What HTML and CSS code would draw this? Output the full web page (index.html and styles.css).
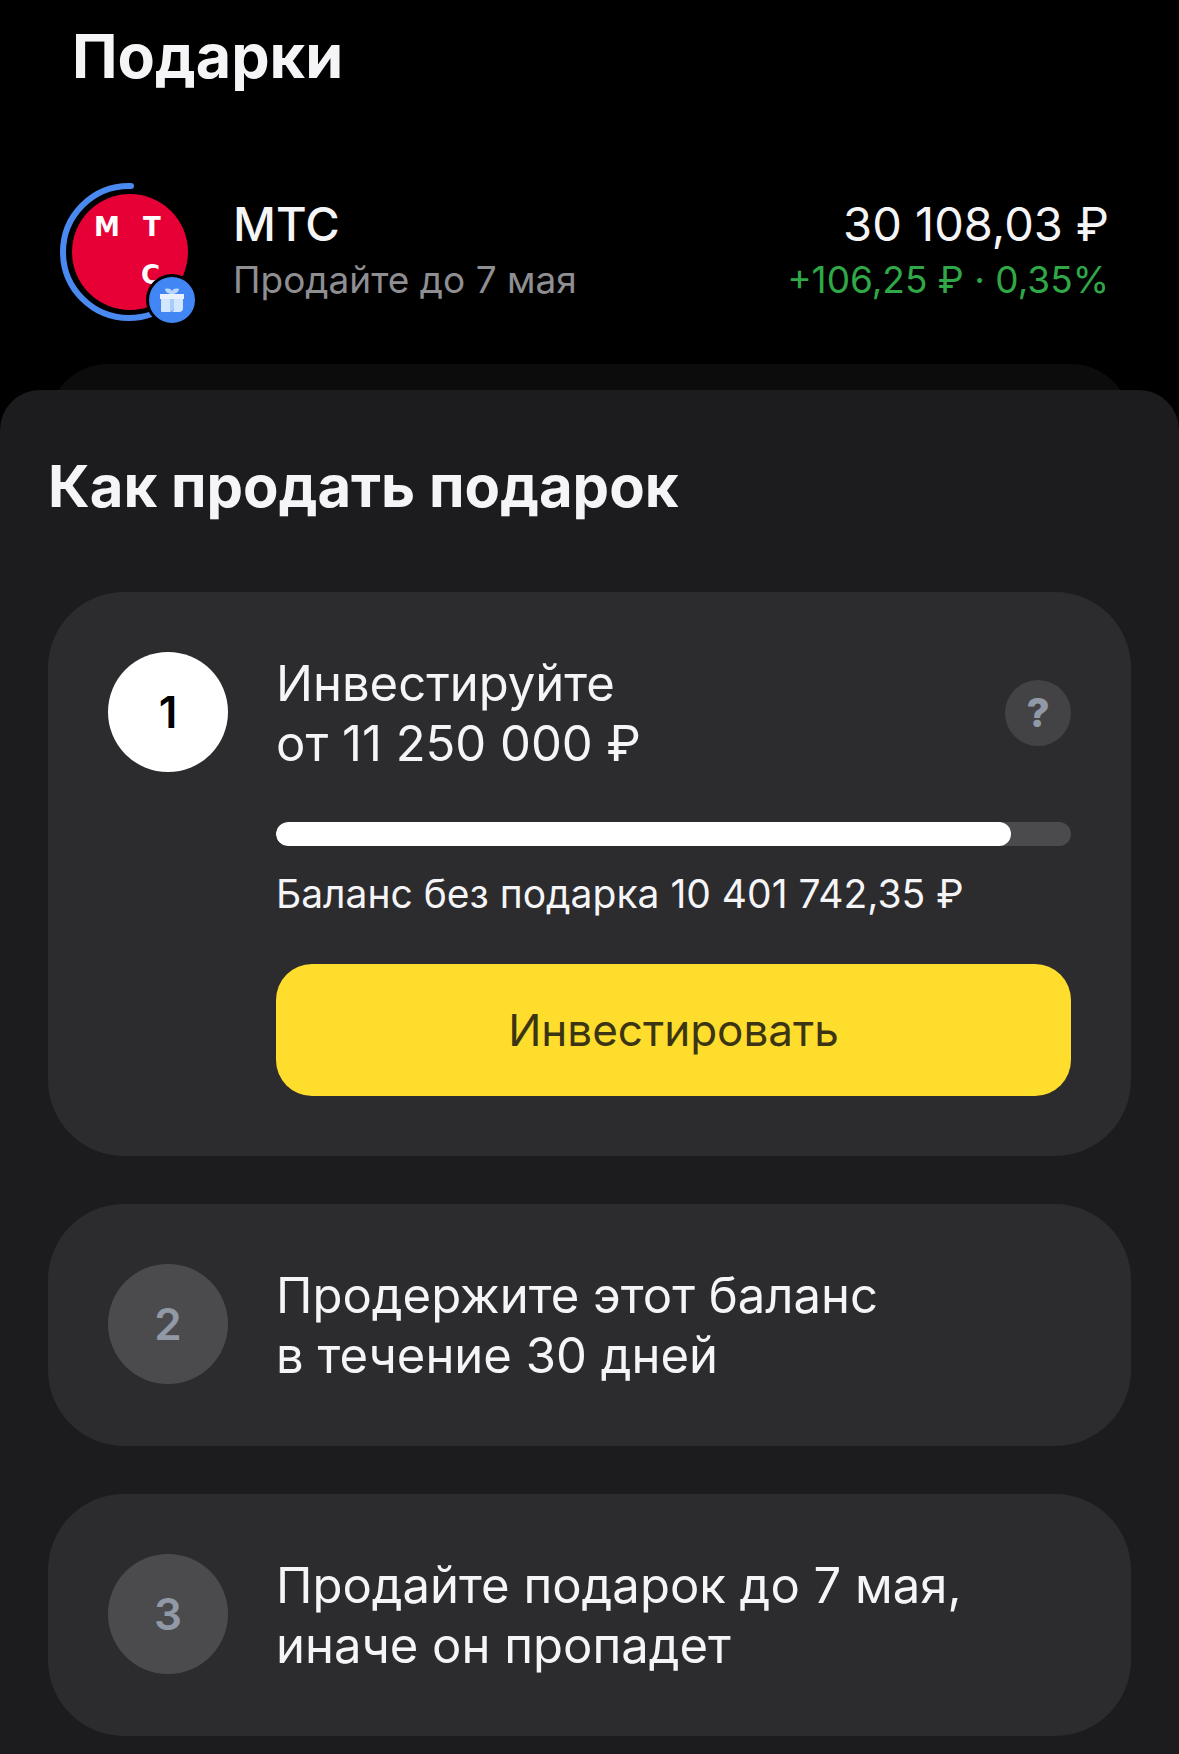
FILE: index.html
```html
<!DOCTYPE html>
<html lang="ru">
<head>
    <meta charset="UTF-8">
    <meta name="viewport" content="width=device-width, initial-scale=1.0">
    <title>Подарки</title>
    <link rel="stylesheet" href="styles.css">
</head>
<body>
    <header class="gifts">
        <h1>Подарки</h1>
        <div class="stock">
            <div class="stock-logo">
                <svg width="140" height="140" viewBox="0 0 140 140" aria-hidden="true">
                    <circle cx="70" cy="70" r="58" fill="#e60035"/>
                    <path d="M71 4H69A66 66 0 0 0 69 136Q81 136 92 132" fill="none" stroke="#4a8af0" stroke-width="6" stroke-linecap="round"/>
                    <g class="logo-letters">
                        <text x="34" y="54">М</text>
                        <text x="83" y="54">Т</text>
                        <text x="81" y="102">С</text>
                    </g>
                </svg>
                <span class="gift-badge">
                    <svg width="24" height="24" viewBox="0 0 24 24" aria-hidden="true">
                        <path d="M0 6h24v5H0z" fill="#e8f2ff"/>
                        <path d="M1 11h9v13H2a1 1 0 0 1-1-1zM14 11h9v9a4 4 0 0 1-4 4h-7q2-1 2-4z" fill="#d3e6ff"/>
                        <path d="M10 11h4v9q0 3-4 4z" fill="#a9ccfb"/>
                        <path d="M12 6C9 6 5 4 5 1c4-1 6 0 7 2 1-2 3-3 7-2 0 3-4 5-7 5z" fill="#b9d6fc"/>
                    </svg>
                </span>
            </div>
            <div class="stock-info">
                <div class="stock-name">МТС</div>
                <div class="stock-note">Продайте до 7 мая</div>
            </div>
            <div class="stock-price">
                <div class="stock-value">30 108,03 ₽</div>
                <div class="stock-change">+106,25 ₽ · 0,35%</div>
            </div>
        </div>
    </header>

    <div class="sheet-back"></div>
    <main class="sheet">
        <h2>Как продать подарок</h2>

        <ol class="steps">
            <li class="step active">
                <span class="step-number">1</span>
                <div class="step-body">
                    <div class="step-head">
                        <p class="step-title">Инвестируйте<br>от 11 250 000 ₽</p>
                        <button class="help-btn" type="button" aria-label="Подробнее">?</button>
                    </div>
                    <progress class="step-progress" value="10401742" max="11250000" aria-labelledby="balance"></progress>
                    <p class="balance" id="balance">Баланс без подарка 10 401 742,35 ₽</p>
                    <button class="invest-btn" type="button">Инвестировать</button>
                </div>
            </li>
            <li class="step">
                <span class="step-number">2</span>
                <p class="step-title">Продержите этот баланс<br>в течение 30 дней</p>
            </li>
            <li class="step">
                <span class="step-number">3</span>
                <p class="step-title">Продайте подарок до 7 мая,<br>иначе он пропадет</p>
            </li>
        </ol>
    </main>
</body>
</html>
```
FILE: styles.css
```css
* {
    box-sizing: border-box;
}
body {
    display: flex;
    flex-direction: column;
    min-height: 100vh;
    margin: 0;
    background-color: #000;
    color: #f5f5f7;
    font-family: Inter, "Liberation Sans", sans-serif;
    -webkit-font-smoothing: antialiased;
}
h1, h2, p {
    margin: 0;
}
button {
    border: none;
    padding: 0;
    font-family: inherit;
    cursor: pointer;
}
.gifts {
    padding: 20px 70px 42px 60px;
}
h1 {
    padding-left: 12px;
    font-size: 61px;
    line-height: 72px;
    font-weight: 700;
}
.stock {
    display: flex;
    align-items: center;
    margin-top: 90px;
}
.stock-logo {
    position: relative;
    flex: none;
    height: 140px;
    margin-right: 33px;
}
.logo-letters {
    fill: #fff;
    font-family: "DejaVu Sans", sans-serif;
    font-size: 26px;
    font-weight: 700;
}
.gift-badge {
    position: absolute;
    right: 2px;
    bottom: -4px;
    display: flex;
    align-items: center;
    justify-content: center;
    width: 52px;
    height: 52px;
    border: 3px solid #000;
    border-radius: 50%;
    background-color: #4285f4;
}
.stock-info {
    flex: 1;
}
.stock-name,
.stock-value {
    font-size: 47px;
    line-height: 56px;
}
.stock-name {
    font-weight: 500;
}
.stock-note,
.stock-change {
    font-size: 37px;
    line-height: 56px;
}
.stock-note {
    color: #8e8e93;
}
.stock-price {
    text-align: right;
}
.stock-change {
    color: #30a847;
}

/* edge of the sheet underneath */
.sheet-back {
    height: 80px;
    margin: 0 48px -54px;
    border-radius: 60px 60px 0 0;
    background-color: #0c0c0d;
}
.sheet {
    position: relative;
    flex: 1;
    padding: 60px 48px 16px;
    border-radius: 40px 40px 0 0;
    background-color: #1c1c1e;
}
h2 {
    font-size: 58px;
    line-height: 72px;
    font-weight: 700;
}
.steps {
    display: grid;
    gap: 48px;
    margin: 70px 0 0;
    padding: 0;
    list-style: none;
}
.step {
    display: flex;
    align-items: flex-start;
    gap: 48px;
    padding: 60px;
    border-radius: 76px;
    background-color: #2c2c2e;
}
.step-number {
    flex: none;
    width: 120px;
    border-radius: 50%;
    background-color: #4b4b4d;
    color: #9299a6;
    font-size: 44px;
    line-height: 120px;
    font-weight: 600;
    text-align: center;
}
.step.active .step-number {
    background-color: #fff;
    color: #000;
}
.step-body {
    flex: 1;
}
.step-head {
    display: flex;
    align-items: center;
    justify-content: space-between;
}
.step-title {
    padding-top: 2px;
    font-size: 49px;
    line-height: 60px;
}
.help-btn {
    width: 66px;
    height: 66px;
    border-radius: 50%;
    background-color: #434345;
    color: #9299a6;
    font-size: 40px;
    line-height: 66px;
    font-weight: 800;
}
.step-progress {
    display: block;
    width: 100%;
    height: 24px;
    margin-top: 48px;
    border: none;
    border-radius: 12px;
    overflow: hidden;
    appearance: none;
    background-color: #4b4b4d;
}
.step-progress::-webkit-progress-bar {
    background-color: #4b4b4d;
}
.step-progress::-webkit-progress-value {
    border-radius: 12px;
    background-color: #fff;
}
.balance {
    margin-top: 24px;
    font-size: 39px;
    line-height: 48px;
}
.invest-btn {
    display: block;
    width: 100%;
    height: 132px;
    margin-top: 46px;
    border-radius: 36px;
    background-color: #ffdd2d;
    color: #3c3514;
    font-size: 44px;
}
```
